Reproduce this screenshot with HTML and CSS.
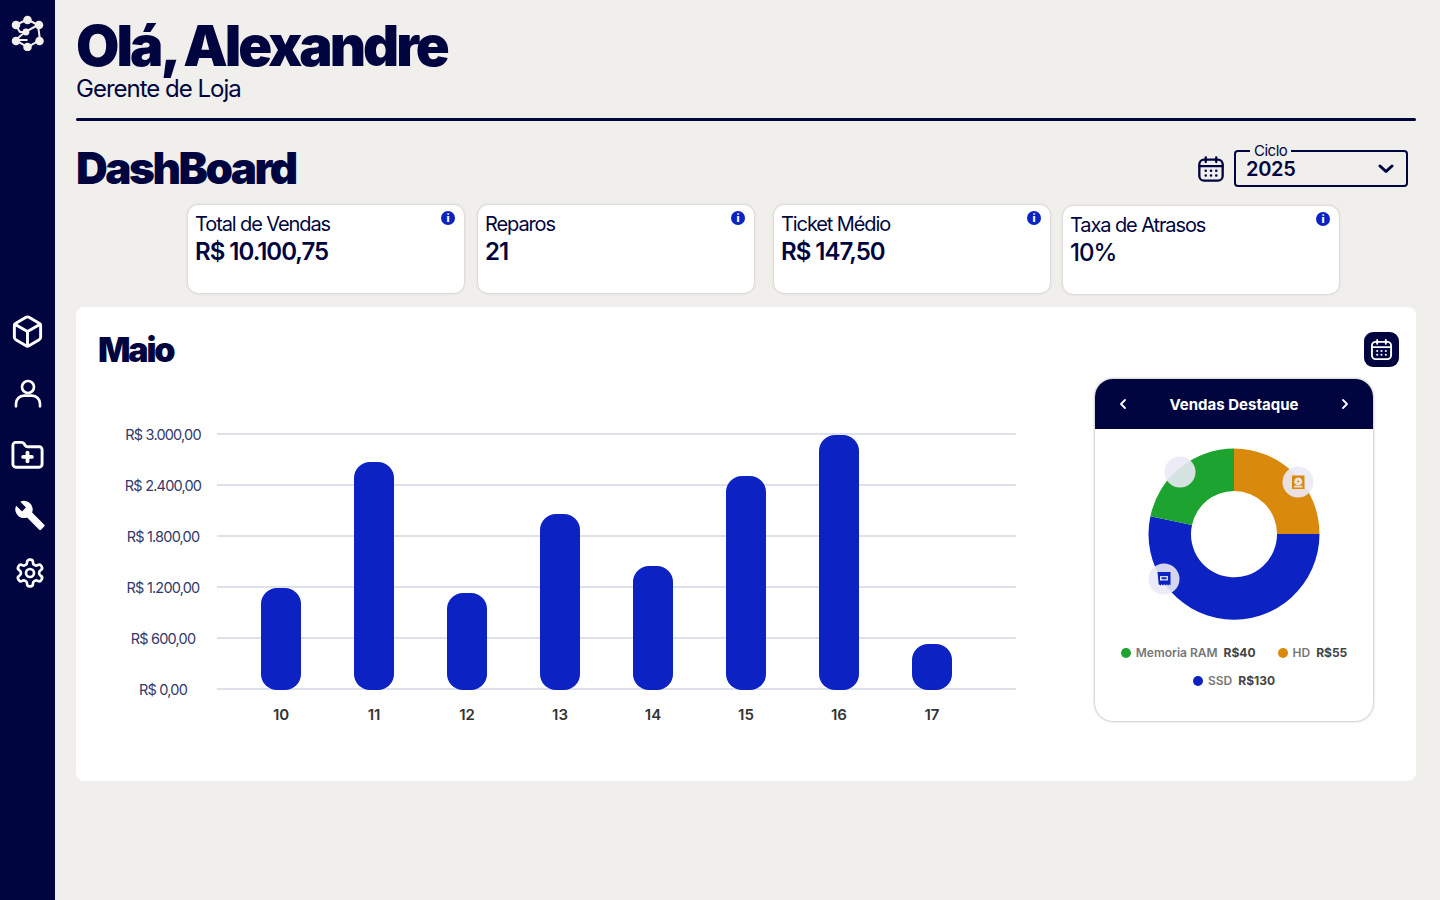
FILE: index.html
```html
<!DOCTYPE html>
<html lang="pt-BR">
<head>
  <meta charset="UTF-8" />
  <title>DashBoard</title>
  <link rel="stylesheet" href="styles.css">
</head>
<body>
  <aside class="sidebar">
    <svg class="logo" viewBox="0 0 34 34" fill="#f0efec" stroke="#f0efec" stroke-width="2">
      <path fill="none" d="M16.500 3.500 L27 9 L29 24 L16.500 31 L4.500 24 L14 16 L27 9 M16.500 3.500 L4.500 9 L9 16 L14 16 M4.500 24 L16.500 24" />
      <circle cx="16.500" cy="4" r="3.300" /><circle cx="5" cy="9" r="3.300" /><circle cx="28" cy="9" r="3.300" />
      <circle cx="15" cy="16" r="2.400" /><circle cx="5" cy="25" r="3.300" /><circle cx="28.500" cy="25" r="3.300" />
      <circle cx="16.500" cy="31" r="3.300" />
    </svg>
    <nav class="nav">
      <a class="nav-item"><svg viewBox="0 0 24 24" class="icon-line wide"><path d="M21 8a2 2 0 0 0-1-1.730l-7-4a2 2 0 0 0-2 0l-7 4A2 2 0 0 0 3 8v8a2 2 0 0 0 1 1.730l7 4a2 2 0 0 0 2 0l7-4A2 2 0 0 0 21 16Z" /><path d="M3.300 7 12 12l8.700-5" /><path d="M12 22V12" /></svg></a>
      <a class="nav-item"><svg viewBox="0 0 24 24" class="icon-line"><circle cx="12" cy="7.500" r="4.500" /><path d="M3 22v-2a6 6 0 0 1 6-6h6a6 6 0 0 1 6 6v2" /></svg></a>
      <a class="nav-item"><svg viewBox="0 0 24 24" class="icon-line wide"><path d="M20 20a2 2 0 0 0 2-2V8a2 2 0 0 0-2-2h-7.900a2 2 0 0 1-1.690-.9L9.600 3.900A2 2 0 0 0 7.930 3H4a2 2 0 0 0-2 2v13a2 2 0 0 0 2 2Z" /><path d="M12 10v6" stroke-width="2.600" /><path d="M9 13h6" stroke-width="2.600" /></svg></a>
      <a class="nav-item short shift"><svg viewBox="0 0 24 24" class="icon-fill"><path d="M22.700 19.300 13.600 10.200c.9-2.300.4-5-1.500-6.900-2-2-5-2.400-7.400-1.300L9 6.300 6 9.300 1.600 5c-1.200 2.400-.7 5.400 1.300 7.400 1.900 1.900 4.600 2.400 6.900 1.500l9.100 9.100c.4.400 1 .4 1.400 0l2.300-2.300c.5-.4.500-1 .1-1.400z" /></svg></a>
      <a class="nav-item short shift"><svg viewBox="0 0 24 24" class="icon-line"><path d="M12.220 2h-.44a2 2 0 0 0-2 2v.18a2 2 0 0 1-1 1.730l-.43.25a2 2 0 0 1-2 0l-.15-.08a2 2 0 0 0-2.730.73l-.22.38a2 2 0 0 0 .73 2.730l.15.1a2 2 0 0 1 1 1.720v.51a2 2 0 0 1-1 1.740l-.15.09a2 2 0 0 0-.73 2.730l.22.38a2 2 0 0 0 2.730.73l.15-.08a2 2 0 0 1 2 0l.43.25a2 2 0 0 1 1 1.730V20a2 2 0 0 0 2 2h.44a2 2 0 0 0 2-2v-.18a2 2 0 0 1 1-1.730l.43-.25a2 2 0 0 1 2 0l.15.08a2 2 0 0 0 2.730-.73l.22-.39a2 2 0 0 0-.73-2.730l-.15-.08a2 2 0 0 1-1-1.740v-.5a2 2 0 0 1 1-1.740l.15-.09a2 2 0 0 0 .73-2.730l-.22-.38a2 2 0 0 0-2.730-.73l-.15.08a2 2 0 0 1-2 0l-.43-.25a2 2 0 0 1-1-1.730V4a2 2 0 0 0-2-2z" /><circle cx="12" cy="12" r="3" /></svg></a>
    </nav>
  </aside>

  <main class="main">
    <header class="greeting">
      <h1 class="hello">Olá, Alexandre</h1>
      <p class="role">Gerente de Loja</p>
    </header>
    <hr class="rule" />

    <section class="title-row">
      <h2 class="page-title">DashBoard</h2>
      <div class="cycle">
        <svg viewBox="0 0 24 24" class="cal-icon"><rect x="2" y="4" width="20" height="18" rx="4" /><path d="M2 9.500h20M7.500 2v4M16.500 2v4" /><path class="dots" d="M7.500 13.500h.01M12 13.500h.01M16.500 13.500h.01M7.500 17.500h.01M12 17.500h.01M16.500 17.500h.01" /></svg>
        <div class="select">
          <span class="select-label">Ciclo</span>
          <span class="select-value">2025</span>
          <svg viewBox="0 0 16 10" class="chevron"><path d="M2 2l6 5.500L14 2" /></svg>
        </div>
      </div>
    </section>

    <section class="cards">
      <div class="card"><span class="info">i</span><p class="card-label">Total de Vendas</p><p class="card-value">R$ 10.100,75</p></div>
      <div class="card"><span class="info">i</span><p class="card-label">Reparos</p><p class="card-value">21</p></div>
      <div class="card card-third"><span class="info">i</span><p class="card-label">Ticket Médio</p><p class="card-value">R$ 147,50</p></div>
      <div class="card card-last"><span class="info">i</span><p class="card-label">Taxa de Atrasos</p><p class="card-value light">10%</p></div>
    </section>

    <section class="panel">
      <div class="panel-head">
        <h2 class="month">Maio</h2>
        <button class="cal-btn"><svg viewBox="0 0 24 24" class="cal-icon white"><rect x="2" y="4" width="20" height="18" rx="4" /><path d="M2 9.500h20M7.500 2v4M16.500 2v4" /><path class="dots" d="M7.500 13.500h.01M12 13.500h.01M16.500 13.500h.01M7.500 17.500h.01M12 17.500h.01M16.500 17.500h.01" /></svg></button>
      </div>
      <div class="panel-body">
        <svg class="chart" viewBox="98 379 950 360" width="950" height="360">
          <g class="grid">
            <path d="M217 434H1016M217 485H1016M217 536H1016M217 587H1016M217 638H1016M217 689H1016" />
          </g>
          <g class="y-labels">
            <text x="163" y="440">R$ 3.000,00</text>
            <text x="163" y="491">R$ 2.400,00</text>
            <text x="163" y="542">R$ 1.800,00</text>
            <text x="163" y="593">R$ 1.200,00</text>
            <text x="163" y="644">R$ 600,00</text>
            <text x="163" y="695">R$ 0,00</text>
          </g>
          <g class="bars">
            <rect x="261" y="588" width="40" height="102" rx="16" />
            <rect x="354" y="462" width="40" height="228" rx="16" />
            <rect x="447" y="593" width="40" height="97" rx="16" />
            <rect x="540" y="514" width="40" height="176" rx="16" />
            <rect x="633" y="566" width="40" height="124" rx="16" />
            <rect x="726" y="476" width="40" height="214" rx="16" />
            <rect x="819" y="435" width="40" height="255" rx="16" />
            <rect x="912" y="644" width="40" height="46" rx="16" />
          </g>
          <g class="x-labels">
            <text x="281" y="720">10</text>
            <text x="374" y="720">11</text>
            <text x="467" y="720">12</text>
            <text x="560" y="720">13</text>
            <text x="653" y="720">14</text>
            <text x="746" y="720">15</text>
            <text x="839" y="720">16</text>
            <text x="932" y="720">17</text>
          </g>
        </svg>

        <aside class="highlight">
          <div class="highlight-head">
            <svg viewBox="0 0 10 12" class="arrow"><path d="M7 2L3 6l4 4" /></svg>
            <span>Vendas Destaque</span>
            <svg viewBox="0 0 10 12" class="arrow"><path d="M3 2l4 4-4 4" /></svg>
          </div>
          <svg class="donut" viewBox="0 0 190 190" width="190" height="190">
            <path fill="#d98a0c" d="M95 9.500A85.500 85.500 0 0 1 180.500 95H138A43 43 0 0 0 95 52Z" />
            <path fill="#0c22c2" d="M180.500 95A85.500 85.500 0 1 1 11.400 77.200L53 86.100A43 43 0 1 0 138 95Z" />
            <path fill="#1ca330" d="M11.400 77.200A85.500 85.500 0 0 1 95 9.500V52A43 43 0 0 0 53 86.100Z" />
            <circle class="bubble" cx="41" cy="33" r="15.500" />
            <circle class="bubble" cx="159" cy="43" r="15.500" />
            <circle class="bubble" cx="25" cy="140" r="15.500" />
            <g fill="#d98a0c">
              <path fill-rule="evenodd" d="M153 36.500h12.500v13.500H153ZM159.200 38.500a4 4 0 1 0 .01 0ZM155 46.800v1.600h8.500v-1.600Z" />
              <circle cx="159.200" cy="42.500" r="1" />
            </g>
            <g fill="#0c22c2">
              <path fill-rule="evenodd" d="M18.500 133h13v13.500l-1.200-1.300-1.200 1.300-1.300-1.300-1.300 1.300-1.300-1.300-1.300 1.300-1.200-1.300-1.200 1.300-1.800-1.300ZM21 137v4.500h8V137Z" />
              <path d="M22.500 138.300h5v1.800h-5Z" />
            </g>
          </svg>
          <div class="legend">
            <span class="legend-item"><i class="dot green"></i><span class="legend-name">Memoria RAM</span><b>R$40</b></span>
            <span class="legend-item"><i class="dot orange"></i><span class="legend-name">HD</span><b>R$55</b></span>
            <span class="legend-item"><i class="dot blue"></i><span class="legend-name">SSD</span><b>R$130</b></span>
          </div>
        </aside>
      </div>
    </section>
  </main>
</body>
</html>
```

FILE: styles.css
```css
html, body {
  margin: 0;
  padding: 0;
  height: 100%;
  overflow: hidden;
}
body {
  display: flex;
  background: #f0efec;
  color: #000540;
  font-family: "Inter", "Liberation Sans", sans-serif;
}
h1, h2, p {
  margin: 0;
}

/* sidebar */
.sidebar {
  width: 55px;
  flex: none;
  height: 900px;
  background: #000540;
  display: flex;
  flex-direction: column;
  align-items: center;
}
.logo {
  width: 34px;
  height: 36px;
  margin-top: 15px;
}
.nav {
  margin-top: 249px;
  display: flex;
  flex-direction: column;
  align-items: center;
}
.nav-item {
  height: 62px;
  display: flex;
  align-items: center;
  justify-content: center;
}
.nav-item.short {
  height: 58px;
}
.nav-item.shift {
  padding-left: 4px;
}
.nav-item svg {
  width: 32px;
  height: 32px;
}
.nav-item svg.wide {
  width: 35px;
  height: 35px;
}
.icon-line {
  fill: none;
  stroke: #fff;
  stroke-width: 2;
  stroke-linecap: round;
  stroke-linejoin: round;
}
.icon-fill {
  fill: #fff;
}

/* header */
.main {
  flex: 1;
  min-width: 0;
  padding: 0 24px 0 21px;
}
.hello {
  margin-top: 18px;
  font-size: 56px;
  line-height: 56px;
  font-weight: 900;
  letter-spacing: -3px;
}
.role {
  font-size: 24px;
  line-height: 28px;
  letter-spacing: -1px;
  margin-top: 1px;
}
.rule {
  margin: 15px 0 0;
  height: 3px;
  border: none;
  border-radius: 2px;
  background: #000540;
}
.title-row {
  margin-top: 25px;
  height: 44px;
  padding-right: 8px;
  display: flex;
  align-items: center;
  justify-content: space-between;
}
.page-title {
  font-size: 44px;
  line-height: 44px;
  font-weight: 900;
  letter-spacing: -2.500px;
}
.cycle {
  display: flex;
  align-items: center;
  gap: 9px;
  margin-top: 1px;
}
.cal-icon {
  width: 28px;
  height: 28px;
  fill: none;
  stroke: #000540;
  stroke-width: 2;
  stroke-linecap: round;
}
.cal-icon.white {
  stroke: #fff;
  width: 23px;
  height: 23px;
}
.cal-icon .dots {
  stroke-width: 2.200;
}
.select {
  position: relative;
  box-sizing: border-box;
  width: 174px;
  height: 37px;
  border: 2px solid #000540;
  border-radius: 4px;
  padding: 0 12px 0 10px;
  display: flex;
  align-items: center;
  justify-content: space-between;
}
.select-label {
  position: absolute;
  left: 14px;
  top: -10px;
  padding: 0 4px;
  background: #f0efec;
  font-size: 15px;
  line-height: 18px;
  letter-spacing: -.5px;
}
.select-value {
  font-size: 20px;
  font-weight: 600;
  letter-spacing: -.3px;
}
.chevron {
  width: 16px;
  height: 10px;
  fill: none;
  stroke: #000540;
  stroke-width: 3;
  stroke-linecap: round;
  stroke-linejoin: round;
}

/* summary cards */
.cards {
  margin-top: 15px;
  height: 89px;
  padding-left: 112px;
  display: flex;
  gap: 14px;
}
.card {
  position: relative;
  box-sizing: border-box;
  width: 276px;
  height: 88px;
  background: #fff;
  border-radius: 10px;
  box-shadow: 0 0 3px rgba(0, 0, 0, .22);
  padding: 7px 7px;
}
.card-third {
  margin-left: 6px;
}
.card-last {
  margin-left: -1px;
  margin-top: 1px;
}
.info {
  position: absolute;
  top: 6px;
  right: 9px;
  width: 14px;
  height: 14px;
  border-radius: 50%;
  background: #0c22c2;
  color: #fff;
  font-size: 11px;
  line-height: 14px;
  font-weight: 800;
  text-align: center;
}
.card-label {
  font-size: 20px;
  line-height: 24px;
  letter-spacing: -1.100px;
}
.card-value {
  font-size: 24px;
  line-height: 32px;
  font-weight: 600;
  letter-spacing: -1px;
}
.card-value.light {
  font-weight: 500;
}

/* month panel */
.panel {
  margin-top: 13px;
  box-sizing: border-box;
  height: 474px;
  background: #fff;
  border-radius: 8px;
  padding: 25px 17px 0 22px;
}
.panel-head {
  height: 47px;
  display: flex;
  justify-content: space-between;
  align-items: flex-start;
}
.month {
  font-size: 34px;
  line-height: 36px;
  font-weight: 900;
  letter-spacing: -2.200px;
}
.cal-btn {
  width: 35px;
  height: 35px;
  padding: 0;
  border: none;
  border-radius: 9px;
  background: #000540;
  display: flex;
  align-items: center;
  justify-content: center;
}
.panel-body {
  display: flex;
  justify-content: space-between;
  align-items: flex-start;
  padding-right: 26px;
}
.chart {
  display: block;
  flex: none;
}
.grid path {
  fill: none;
  stroke: #d3d6e4;
  stroke-width: 1.500;
}
.y-labels text {
  font-size: 14.500px;
  fill: #33386a;
  text-anchor: middle;
  letter-spacing: -.8px;
}
.bars rect {
  fill: #0c22c2;
}
.x-labels text {
  font-size: 15px;
  font-weight: 600;
  fill: #333;
  text-anchor: middle;
}

/* highlight card */
.highlight {
  box-sizing: border-box;
  width: 278px;
  height: 342px;
  background: #fff;
  border-radius: 18px;
  box-shadow: 0 0 3px rgba(0, 0, 0, .4);
  overflow: hidden;
  display: flex;
  flex-direction: column;
  align-items: center;
}
.highlight-head {
  width: 100%;
  box-sizing: border-box;
  height: 50px;
  flex: none;
  background: #000540;
  color: #fff;
  padding: 0 23px;
  display: flex;
  align-items: center;
  justify-content: space-between;
  font-size: 15px;
  font-weight: 700;
}
.arrow {
  width: 10px;
  height: 12px;
  fill: none;
  stroke: #fff;
  stroke-width: 1.800;
  stroke-linecap: round;
  stroke-linejoin: round;
}
.donut {
  display: block;
  margin-top: 10px;
  flex: none;
}
.bubble {
  fill: rgba(234, 233, 246, .9);
}
.legend {
  margin-top: 16px;
  width: 250px;
  display: flex;
  flex-wrap: wrap;
  justify-content: center;
  column-gap: 22px;
  row-gap: 12px;
  font-size: 12px;
  line-height: 16px;
}
.legend-item {
  display: flex;
  align-items: center;
}
.dot {
  width: 10px;
  height: 10px;
  border-radius: 50%;
  margin-right: 5px;
}
.dot.green { background: #1ca330; }
.dot.orange { background: #d98a0c; }
.dot.blue { background: #0c22c2; }
.legend-name {
  color: #777;
  font-weight: 600;
  margin-right: 6px;
}
.legend-item b {
  color: #444;
  font-weight: 700;
}
```
